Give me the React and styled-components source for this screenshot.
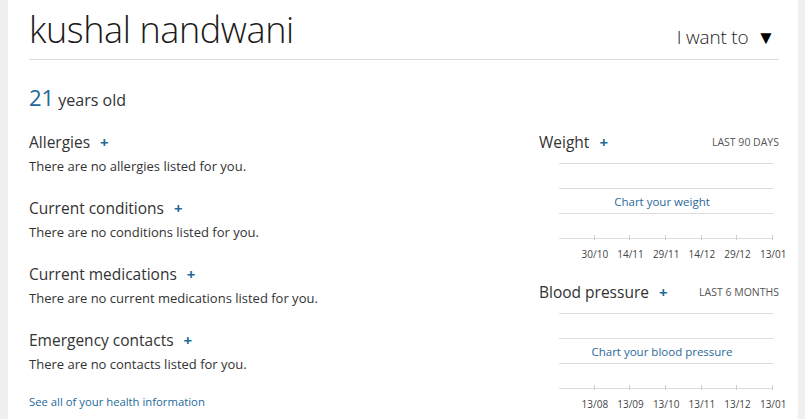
import React from "react";
import styled, { createGlobalStyle } from "styled-components";

const Global = createGlobalStyle`
  html, body {
    margin: 0;
    padding: 0;
    background: #f0f0f0;
    font-family: "Open Sans", "Noto Sans", sans-serif;
    color: #333;
  }
`;

const weightTicks = ["30/10", "14/11", "29/11", "14/12", "29/12", "13/01"];
const bpTicks = ["13/08", "13/09", "13/10", "13/11", "13/12", "13/01"];

const sections = [
  { title: "Allergies", text: "There are no allergies listed for you." },
  { title: "Current conditions", text: "There are no conditions listed for you." },
  { title: "Current medications", text: "There are no current medications listed for you." },
  { title: "Emergency contacts", text: "There are no contacts listed for you." },
];

function Chart({ title, range, label, ticks }) {
  return (
    <ChartWrap>
      <ChartHead>
        <Heading>
          {title}
          <Plus>+</Plus>
        </Heading>
        <Range>{range}</Range>
      </ChartHead>
      <Plot>
        <GridRow />
        <GridRow>
          <ChartLink>{label}</ChartLink>
        </GridRow>
        <GridRow />
        <Axis>
          {ticks.map((t) => (
            <TickCell key={t} />
          ))}
        </Axis>
        <Labels>
          {ticks.map((t) => (
            <TickLabel key={t}>{t}</TickLabel>
          ))}
        </Labels>
      </Plot>
    </ChartWrap>
  );
}

export default function App() {
  return (
    <>
      <Global />
      <Panel>
        <Header>
          <Name>kushal nandwani</Name>
          <Menu>
            I want to <Arrow>▼</Arrow>
          </Menu>
        </Header>
        <Age>
          <AgeNum>21</AgeNum> years old
        </Age>
        <Columns>
          <Left>
            {sections.map((s) => (
              <Section key={s.title}>
                <Heading>
                  {s.title}
                  <Plus>+</Plus>
                </Heading>
                <Note>{s.text}</Note>
              </Section>
            ))}
            <SeeAll>See all of your health information</SeeAll>
          </Left>
          <Right>
            <Chart title="Weight" range="Last 90 days" label="Chart your weight" ticks={weightTicks} />
            <Chart
              title="Blood pressure"
              range="Last 6 months"
              label="Chart your blood pressure"
              ticks={bpTicks}
            />
          </Right>
        </Columns>
      </Panel>
    </>
  );
}

const Panel = styled.div`
  margin: 0 7px 0 8px;
  background: #fff;
  height: 419px;
  padding: 0 19px 0 21px;
  box-sizing: border-box;
  overflow: hidden;
`;

const Header = styled.div`
  display: flex;
  justify-content: space-between;
  align-items: flex-end;
  height: 60px;
  border-bottom: 1px solid #dcdcdc;
  box-sizing: border-box;
`;

const Name = styled.h1`
  margin: 0 0 7px 0;
  font-size: 36px;
  font-weight: 300;
  color: #1a1a1a;
  line-height: 44px;
  letter-spacing: -0.4px;
`;

const Menu = styled.div`
  font-size: 19px;
  font-weight: 300;
  color: #222;
  margin: 0 4px 10px 0;
  line-height: 24px;
  display: flex;
  align-items: center;
  letter-spacing: -0.2px;
`;

const Arrow = styled.span`
  font-size: 19px;
  color: #000;
  margin-left: 8px;
`;

const Age = styled.div`
  margin-top: 23px;
  font-size: 16px;
  color: #333;
  line-height: 28px;
`;

const AgeNum = styled.span`
  font-size: 22px;
  color: #226899;
`;

const Columns = styled.div`
  display: flex;
  justify-content: space-between;
  margin-top: 17px;
`;

const Left = styled.div`
  display: flex;
  flex-direction: column;
`;

const Section = styled.div`
  height: 66px;
`;

const Heading = styled.div`
  font-size: 15.5px;
  color: #333;
  line-height: 22px;
  display: flex;
  align-items: center;
`;

const Plus = styled.span`
  color: #1d6a98;
  font-weight: 700;
  font-size: 15px;
  margin-left: 10px;
`;

const Note = styled.div`
  font-size: 13px;
  color: #333;
  line-height: 18px;
  margin-top: 4px;
`;

const SeeAll = styled.a`
  font-size: 11.3px;
  color: #1d6a98;
  line-height: 18px;
  margin-top: -2px;
`;

const Right = styled.div`
  width: 240px;
  display: flex;
  flex-direction: column;
  gap: 20px;
`;

const ChartWrap = styled.div`
  display: flex;
  flex-direction: column;
`;

const ChartHead = styled.div`
  display: flex;
  justify-content: space-between;
  align-items: center;
`;

const Range = styled.span`
  font-size: 10.5px;
  text-transform: uppercase;
  color: #555;
`;

const Plot = styled.div`
  margin: 10px 0 0 20px;
  width: 214px;
  border-top: 1px solid #dcdcdc;
`;

const GridRow = styled.div`
  height: 24px;
  border-bottom: 1px solid #dcdcdc;
  display: flex;
  align-items: center;
  justify-content: center;
`;

const ChartLink = styled.span`
  font-size: 11.5px;
  color: #2a6a9a;
  margin-right: 8px;
`;

const Axis = styled.div`
  display: flex;
  height: 0;
`;

const TickCell = styled.div`
  flex: 1;
  position: relative;
  &::after {
    content: "";
    position: absolute;
    right: 0;
    top: -4px;
    height: 5px;
    width: 1px;
    background: #ccc;
  }
`;

const Labels = styled.div`
  display: flex;
  margin: 8px -18px 0 18px;
`;

const TickLabel = styled.span`
  flex: 1;
  text-align: center;
  font-size: 10px;
  color: #444;
  line-height: 14px;
`;
